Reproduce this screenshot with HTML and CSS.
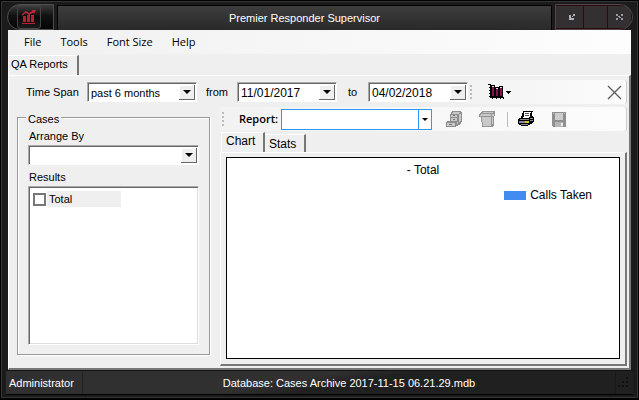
FILE: index.html
```html
<!DOCTYPE html>
<html lang="en">
<head>
<meta charset="utf-8">
<title>Premier Responder Supervisor</title>
<link rel="stylesheet" href="styles.css">
</head>
<body>
<div class="window">
  <header class="titlebar">
    <button class="app-button" aria-label="Application menu">
      <span class="app-icon">
        <svg width="16" height="16" viewBox="0 0 16 16"><path d="M1 14h13v1H1zM2 7h3v6H2zM6 6h3v7H6zM10 6h3v7h-3z" fill="#b81f30"/><path d="M1 6l4-3 3 2 5-3" fill="none" stroke="#c82438" stroke-width="1.5"/><path d="M11 1h4l-2 4z" fill="#c82438"/></svg>
      </span>
    </button>
    <h1 class="title">Premier Responder Supervisor</h1>
    <div class="controls">
      <button class="minimize" aria-label="Minimize"><svg width="8" height="8" viewBox="0 0 8 8" shape-rendering="crispEdges"><path d="M1 2h2v3h3v2H1zM5 1h2v2H5zM4 3h1v1H4z" fill="#aeb2ba"/></svg></button>
      <button aria-label="Maximize"></button>
      <button aria-label="Close"><svg width="8" height="8" viewBox="0 0 8 8" shape-rendering="crispEdges"><path d="M0 1h2v2H0zM5 1h2v2H5zM2 3h2v1H2zM3 4h2v1H3zM0 5h2v2H0zM5 5h2v2H5z" fill="#9a9ea6"/></svg></button>
    </div>
  </header>
  <main class="client">
    <nav class="menu">
      <button>File</button><button>Tools</button><button>Font Size</button><button>Help</button>
    </nav>
    <div class="page-tabs"><button class="page-tab">QA Reports</button></div>
    <section class="page">
      <div class="span-bar">
        <label class="span-label" for="span">Time Span</label>
        <div class="combo span-combo">
          <select id="span"><option>past 6 months</option></select>
          <span class="arrow"></span>
        </div>
        <label class="from-label" for="from">from</label>
        <div class="combo date-combo"><input id="from" type="text" value="11/01/2017"><button class="arrow" aria-label="Choose start date"></button></div>
        <label class="to-label" for="to">to</label>
        <div class="combo date-combo"><input id="to" type="text" value="04/02/2018"><button class="arrow" aria-label="Choose end date"></button></div>
        <div class="strip chart-strip">
          <span class="grip"></span>
          <button class="tool chart-tool" aria-label="Chart type"><svg width="24" height="16" viewBox="0 0 24 16" shape-rendering="crispEdges"><path d="M2 0h1v13h13v1H2zM0 0h2v1H0zM1 3h1v1H1zM1 6h1v1H1zM1 9h1v1H1zM1 12h1v1H1zM4 14h1v1H4zM8 14h1v1H8zM12 14h1v1h-1zM15 14h1v1h-1z"/><path d="M3 1h4v12H3zM7 3h4v10H7zM11 2h4v11h-4z"/><path d="M4 3h2v9H4zM8 5h2v7H8zM12 4h2v8h-2z" fill="#86144c"/><path d="M4 2h2v1H4zM8 4h2v1H8zM12 3h2v1h-2z" fill="#ddd"/><path d="M18 7h5v1h-1v1h-1v1h-1V9h-1V8h-1z"/></svg></button>
          <button class="tool close-tool" aria-label="Close report"><svg width="15" height="15" viewBox="0 0 15 15"><path d="M1 1l13 13M14 1L1 14" stroke="#606060" stroke-width="1.4"/></svg></button>
        </div>
      </div>
      <div class="columns">
        <fieldset class="cases">
          <legend>Cases</legend>
          <label for="arrange">Arrange By</label>
          <div class="combo"><select id="arrange"><option></option></select><span class="arrow"></span></div>
          <span class="results-label">Results</span>
          <div class="results"><label class="result"><input type="checkbox"><span>Total</span></label></div>
        </fieldset>
        <div class="report">
          <div class="strip report-strip">
            <span class="grip"></span>
            <label class="report-label" for="report">Report:</label>
            <div class="report-combo"><select id="report"><option></option></select><span class="flat-arrow"></span></div>
            <button class="tool cabinet" aria-label="Archive"><svg width="16" height="16" viewBox="0 0 16 16" shape-rendering="crispEdges"><path d="M6 0h9v1h1v10h-1v2h-1v1h-2v1h-2v1H0v-5h1v-1h3V3h1V1h1z" fill="#8e8e8e"/><path d="M7 1h7l-2 2H6zM5 4h6v2H5zM5 7h6v3H5zM1 12h8v3H1zM11 11h1v2h-1zM13 3h2v7h-1v1h-1z" fill="#c9c9c9"/><path d="M7 4h2v1H7zM7 8h2v1H7zM3 13h3v1H3z" fill="#777"/></svg></button>
            <button class="tool bin" aria-label="Delete"><svg width="16" height="16" viewBox="0 0 16 16" shape-rendering="crispEdges"><path d="M3 0h12l1 1v4h-1v9l-2 2H3L2 6H0V3h1l1-2z" fill="#959595"/><path d="M4 1h10v1H3zM2 3h10v2H1zM3 6h9v9H4zM13 3h2v2h-2zM13 6h1v7h-1z" fill="#c9c9c9"/></svg></button>
            <span class="separator"></span>
            <button class="tool" aria-label="Print"><svg width="16" height="16" viewBox="0 0 16 16" shape-rendering="crispEdges"><path d="M5 0h10v1h-1v4h1v1h1v5h-1v1h-1v1h-2v1h-2v1H3v-1H1v-1H0V8h1V7h2V5h1V2h1z"/><path d="M6 1h7v1h-1v4h-1v1H5V6h1z" fill="#fff"/><path d="M7 2h4v1H7zM7 4h4v1H7z" fill="#555"/><path d="M2 8h9v1H2zM1 10h6v2H1zM3 13h7v1H3zM12 7h3v1h-3zM12 9h3v1h-3z" fill="#8c8c8c"/><path d="M7 10h4v2H7z" fill="#d8cb20"/></svg></button>
            <button class="tool save" aria-label="Save"><svg width="14" height="15" viewBox="0 0 14 15" shape-rendering="crispEdges"><path d="M0 0h14v15H1l-1-1z" fill="#8f8f8f"/><path d="M3 1h8v7H3zM1 1h1v1H1zM12 1h1v1h-1z" fill="#ccc"/><path d="M3 10h8v5H3z" fill="#b5b5b5"/><path d="M9 11h2v3H9z" fill="#eee"/></svg></button>
          </div>
          <div class="view-tabs"><button class="view-tab current">Chart</button><button class="view-tab">Stats</button></div>
          <div class="view">
            <div class="chart">
              <h2 class="chart-title">- Total</h2>
              <div class="legend"><span class="swatch"></span>Calls Taken</div>
            </div>
          </div>
        </div>
      </div>
    </section>
  </main>
  <footer class="status">
    <span class="user">Administrator</span>
    <span class="database">Database: Cases Archive 2017-11-15 06.21.29.mdb</span>
    <span class="resize"><svg width="12" height="12" viewBox="0 0 12 12" shape-rendering="crispEdges"><path d="M8 0h2v2H8zM4 4h2v2H4zM8 4h2v2H8zM0 8h2v2H0zM4 8h2v2H4zM8 8h2v2H8z" fill="#111"/></svg></span>
  </footer>
</div>
</body>
</html>
```
FILE: styles.css
```css
* { box-sizing: border-box; }
body { margin: 0; font: 11px/14px "Liberation Sans", Arial, sans-serif; color: #000; }
button, input, select { font: inherit; color: inherit; margin: 0; padding: 0; border: 0; border-radius: 0; background: none; }
svg { display: block; }
select { appearance: none; }

.window { min-height: 100vh; display: flex; flex-direction: column; padding: 0 1px 1px; background: #1c1b1c; border: 1px solid #000; border-bottom-width: 2px; box-shadow: inset 0 0 0 1px #353535; }
.titlebar { display: flex; gap: 3px; height: 29px; padding: 3px 4px 0 5px; }
.app-button { width: 47px; padding-left: 9px; border: 1px solid #4d4d4d; border-radius: 14px 0 0 14px; background: linear-gradient(#3c3c3c, #111 45%, #050505); }
.app-icon { display: flex; align-items: center; justify-content: center; width: 24px; height: 24px; border: 1px solid #444; border-radius: 3px; background: linear-gradient(#3c3c3c, #080808 50%, #1b1b1b); }
.title { flex: 1; margin: 1px 0 0; border: 1px solid #000; border-bottom: 0; background: linear-gradient(#3d3d3d, #292929); color: #fff; font-size: 11px; font-weight: normal; line-height: 25px; text-align: center; }
.controls { display: flex; width: 78px; border: 1px solid #504548; border-radius: 0 14px 14px 0; background: #343032; overflow: hidden; }
.controls button { flex: 1; display: flex; justify-content: center; padding-top: 7px; border: 1px solid #2a0c0c; border-width: 1px 1px 1px 0; }
.controls .minimize { padding-left: 4px; }

.client { flex: 1; display: flex; flex-direction: column; margin: 0 6px; background: #efefef; }
.menu { display: flex; gap: 19px; height: 24px; padding-left: 16px; background: linear-gradient(90deg, #f0f0f0, #fdfdfd); font-family: "Open Sans", sans-serif; }
.page-tabs { height: 21px; padding-top: 1px; }
.page-tab { height: 20px; width: 71px; padding: 0 0 3px 2px; text-align: left; border-top: 1px solid #fff; border-left: 1px solid #fff; border-right: 2px solid #777; }
.page { flex: 1; display: flex; flex-direction: column; border: 1px solid #fff; border-right: 2px solid #777; border-bottom: 2px solid #777; padding: 4px 2px 2px 8px; }
.span-bar { display: flex; align-items: center; height: 24px; }
.span-label { width: 70px; padding-left: 9px; white-space: nowrap; }
.combo { display: flex; height: 20px; border: 1px solid #aaa; border-right-color: #fff; border-bottom-color: #fff; background: #fff; box-shadow: inset 1px 1px #666; padding: 2px 1px 1px 2px; }
.combo select, .combo input { flex: 1; min-width: 0; padding-left: 1px; outline: 0; }
.arrow { width: 16px; flex: none; display: flex; align-items: center; justify-content: center; background: #efefef; border-right: 1px solid #666; border-bottom: 1px solid #666; box-shadow: inset 1px 1px #fff; }
.arrow::before, .flat-arrow::before { content: ""; border: 4px solid transparent; border-top-color: #000; border-bottom: 0; }
.span-combo { width: 110px; }
.from-label { width: 40px; padding-left: 9px; }
.date-combo { width: 100px; font-size: 12px; }
.to-label { width: 31px; padding-left: 11px; }
.strip { display: flex; align-items: center; height: 24px; border-right: 1px solid #ccc; border-radius: 0 3px 3px 0; background: linear-gradient(90deg, #f2f2f2, #fcfcfc); }
.chart-strip { flex: 1; }
.grip { width: 2px; height: 14px; margin-left: 2px; background: repeating-linear-gradient(#bbb 0 2px, transparent 2px 4px); }
.tool { display: flex; flex: none; }
.chart-tool { margin-left: 16px; }
.close-tool { margin-left: auto; margin-right: 4px; }

.columns { flex: 1; display: flex; gap: 10px; padding-top: 3px; }
.cases { width: 193px; flex: none; display: flex; flex-direction: column; margin: 3px 0 11px; padding: 4px 10px 9px; border: 1px solid #999; box-shadow: inset 1px 1px #fff, 1px 1px #fff; }
.cases legend { margin-left: -2px; padding: 3px 2px 0; background: #efefef; line-height: 12px; }
.cases > label, .results-label { padding-left: 1px; }
.cases .combo { margin: 2px 0 5px; }
.results { flex: 1; margin-top: 2px; border: 1px solid #aaa; border-right-color: #fff; border-bottom-color: #fff; background: #fff; box-shadow: inset 1px 1px #666, inset -1px -1px #ddd; padding: 4px; }
.result { display: flex; align-items: center; gap: 1px; width: 88px; height: 16px; }
.result input { appearance: none; flex: none; width: 13px; height: 13px; border: 2px solid #777; background: #fff; }
.result span { flex: 1; background: #efefef; padding: 1px 2px; }

.report { flex: 1; min-width: 0; display: flex; flex-direction: column; }
.report-label { width: 57px; padding-left: 15px; font-family: "Open Sans", sans-serif; font-weight: 600; }
.report-combo { display: flex; width: 151px; height: 21px; border: 1px solid #3296f5; background: #fff; }
.report-combo select { flex: 1; min-width: 0; outline: 0; }
.flat-arrow { width: 13px; display: flex; align-items: center; justify-content: center; border-left: 1px solid #3296f5; }
.flat-arrow::before { border-width: 3px; border-bottom: 0; }
.cabinet { margin-left: 14px; }
.bin { margin-left: 17px; }
.separator { width: 1px; height: 15px; margin: 0 10px 0 12px; background: #bbb; }
.save { margin-left: 18px; }
.view-tabs { display: flex; align-items: flex-end; height: 21px; padding-left: 1px; }
.view-tab { width: 41px; height: 18px; padding: 0 0 0 4px; text-align: left; border-top: 1px solid #fff; border-right: 2px solid #777; font-size: 12px; }
.view-tab.current { width: 44px; height: 20px; padding-bottom: 3px; border-left: 1px solid #fff; }
.view { flex: 1; display: flex; padding: 4px 5px 5px; border: 1px solid #fff; border-right: 2px solid #777; border-bottom: 2px solid #777; }
.chart { flex: 1; padding: 5px 27px; border: 1px solid #000; background: #fff; font-size: 12px; }
.chart-title { margin: 0 0 11px; font-size: 12px; font-weight: normal; text-align: center; }
.legend { display: flex; align-items: center; justify-content: flex-end; gap: 4px; }
.swatch { width: 22px; height: 9px; background: #418cf0; }

.status { display: flex; align-items: center; height: 25px; margin: 0 4px 2px; background: linear-gradient(170deg, #303030 45%, #202020 55%); border-top: 1px solid #111; border-bottom: 1px solid #000; color: #fff; }
.user { width: 77px; padding-left: 3px; border-right: 1px solid #222; line-height: 22px; }
.database { flex: 1; text-align: center; }
.resize { width: 18px; display: flex; border-left: 1px solid #181818; padding: 5px 2px; }
```
